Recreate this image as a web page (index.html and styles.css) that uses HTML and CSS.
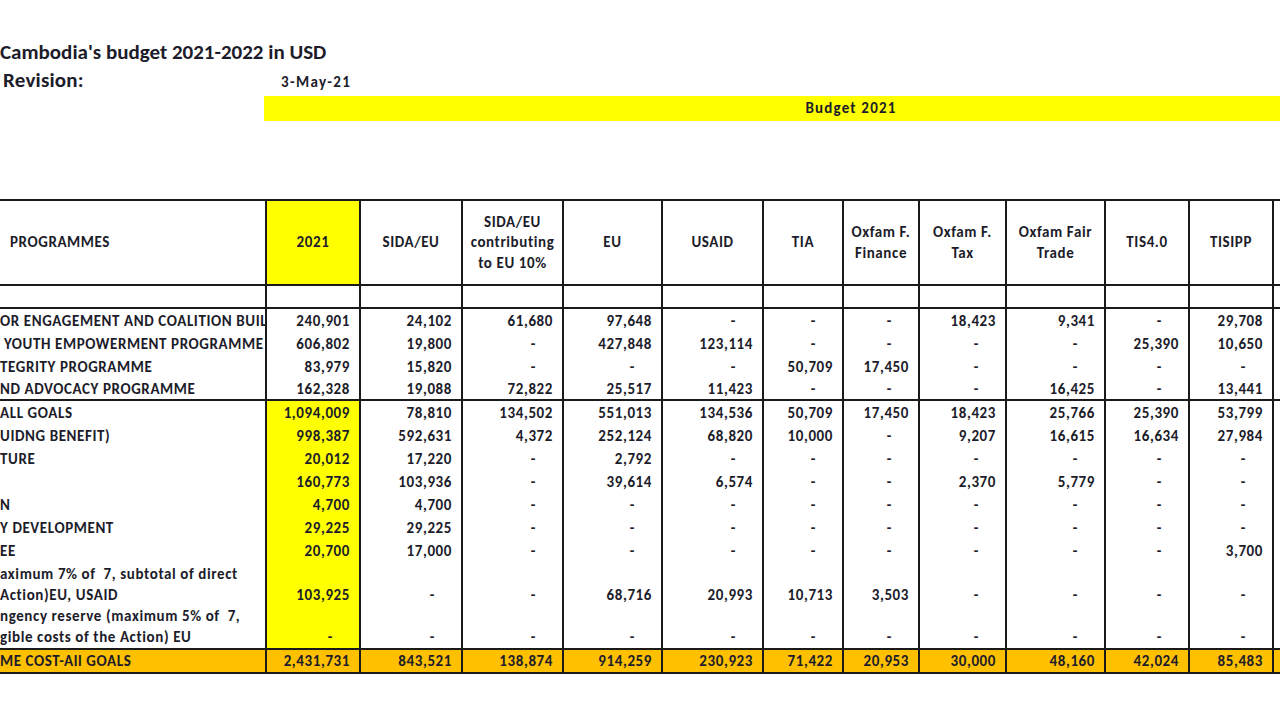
FILE: index.html
```html
<!DOCTYPE html>
<html lang="en">
<head>
<meta charset="utf-8">
<title>Cambodia's budget 2021-2022 in USD</title>
<link rel="stylesheet" href="styles.css">
</head>
<body>
<div class="sheet">
  <div class="title">Cambodia's budget 2021-2022 in USD</div>
  <div class="revision">
    <span class="rev-label">Revision:</span>
    <span class="rev-date">3-May-21</span>
  </div>
  <div class="band-row">
    <div class="band">Budget 2021</div>
  </div>
  <table class="budget">
    <colgroup>
      <col class="c-label">
      <col class="c-2021">
      <col class="c-sida">
      <col class="c-sidaeu">
      <col class="c-eu">
      <col class="c-usaid">
      <col class="c-tia">
      <col class="c-oxfin">
      <col class="c-oxtax">
      <col class="c-oxfair">
      <col class="c-tis4">
      <col class="c-tisipp">
      <col class="c-extra">
    </colgroup>
    <thead>
      <tr class="head">
        <th class="lbl">PROGRAMMES</th>
        <th class="hl">2021</th>
        <th>SIDA/EU</th>
        <th>SIDA/EU contributing to EU 10%</th>
        <th>EU</th>
        <th>USAID</th>
        <th>TIA</th>
        <th>Oxfam F. Finance</th>
        <th>Oxfam F. Tax</th>
        <th>Oxfam Fair Trade</th>
        <th>TIS4.0</th>
        <th>TISIPP</th>
        <th></th>
      </tr>
      <tr class="blank">
        <td class="lbl"></td><td></td><td></td><td></td><td></td><td></td><td></td><td></td><td></td><td></td><td></td><td></td><td></td>
      </tr>
    </thead>
    <tbody class="progs">
      <tr><td class="lbl">OR ENGAGEMENT AND COALITION BUIL</td><td>240,901</td><td>24,102</td><td>61,680</td><td>97,648</td><td><i>-</i></td><td><i>-</i></td><td><i>-</i></td><td>18,423</td><td>9,341</td><td><i>-</i></td><td>29,708</td><td></td></tr>
      <tr><td class="lbl">&nbsp;YOUTH EMPOWERMENT PROGRAMME</td><td>606,802</td><td>19,800</td><td><i>-</i></td><td>427,848</td><td>123,114</td><td><i>-</i></td><td><i>-</i></td><td><i>-</i></td><td><i>-</i></td><td>25,390</td><td>10,650</td><td></td></tr>
      <tr><td class="lbl">TEGRITY PROGRAMME</td><td>83,979</td><td>15,820</td><td><i>-</i></td><td><i>-</i></td><td><i>-</i></td><td>50,709</td><td>17,450</td><td><i>-</i></td><td><i>-</i></td><td><i>-</i></td><td><i>-</i></td><td></td></tr>
      <tr><td class="lbl">ND ADVOCACY PROGRAMME</td><td>162,328</td><td>19,088</td><td>72,822</td><td>25,517</td><td>11,423</td><td><i>-</i></td><td><i>-</i></td><td><i>-</i></td><td>16,425</td><td><i>-</i></td><td>13,441</td><td></td></tr>
    </tbody>
    <tbody class="costs">
      <tr><td class="lbl">ALL GOALS</td><td class="hl">1,094,009</td><td>78,810</td><td>134,502</td><td>551,013</td><td>134,536</td><td>50,709</td><td>17,450</td><td>18,423</td><td>25,766</td><td>25,390</td><td>53,799</td><td></td></tr>
      <tr><td class="lbl">UIDNG BENEFIT)</td><td class="hl">998,387</td><td>592,631</td><td>4,372</td><td>252,124</td><td>68,820</td><td>10,000</td><td><i>-</i></td><td>9,207</td><td>16,615</td><td>16,634</td><td>27,984</td><td></td></tr>
      <tr><td class="lbl">TURE</td><td class="hl">20,012</td><td>17,220</td><td><i>-</i></td><td>2,792</td><td><i>-</i></td><td><i>-</i></td><td><i>-</i></td><td><i>-</i></td><td><i>-</i></td><td><i>-</i></td><td><i>-</i></td><td></td></tr>
      <tr><td class="lbl"></td><td class="hl">160,773</td><td>103,936</td><td><i>-</i></td><td>39,614</td><td>6,574</td><td><i>-</i></td><td><i>-</i></td><td>2,370</td><td>5,779</td><td><i>-</i></td><td><i>-</i></td><td></td></tr>
      <tr><td class="lbl">N</td><td class="hl">4,700</td><td>4,700</td><td><i>-</i></td><td><i>-</i></td><td><i>-</i></td><td><i>-</i></td><td><i>-</i></td><td><i>-</i></td><td><i>-</i></td><td><i>-</i></td><td><i>-</i></td><td></td></tr>
      <tr><td class="lbl">Y DEVELOPMENT</td><td class="hl">29,225</td><td>29,225</td><td><i>-</i></td><td><i>-</i></td><td><i>-</i></td><td><i>-</i></td><td><i>-</i></td><td><i>-</i></td><td><i>-</i></td><td><i>-</i></td><td><i>-</i></td><td></td></tr>
      <tr><td class="lbl">EE</td><td class="hl">20,700</td><td>17,000</td><td><i>-</i></td><td><i>-</i></td><td><i>-</i></td><td><i>-</i></td><td><i>-</i></td><td><i>-</i></td><td><i>-</i></td><td><i>-</i></td><td>3,700</td><td></td></tr>
      <tr class="tall t1"><td class="lbl">aximum 7% of&nbsp; 7, subtotal of direct<br>Action)EU, USAID</td><td class="hl">103,925</td><td><i>-</i></td><td><i>-</i></td><td>68,716</td><td>20,993</td><td>10,713</td><td>3,503</td><td><i>-</i></td><td><i>-</i></td><td><i>-</i></td><td><i>-</i></td><td></td></tr>
      <tr class="tall t2"><td class="lbl">ngency reserve (maximum 5% of&nbsp; 7,<br>gible costs of the Action) EU</td><td class="hl"><i>-</i></td><td><i>-</i></td><td><i>-</i></td><td><i>-</i></td><td><i>-</i></td><td><i>-</i></td><td><i>-</i></td><td><i>-</i></td><td><i>-</i></td><td><i>-</i></td><td><i>-</i></td><td></td></tr>
    </tbody>
    <tfoot>
      <tr class="total"><td class="lbl">ME COST-All GOALS</td><td>2,431,731</td><td>843,521</td><td>138,874</td><td>914,259</td><td>230,923</td><td>71,422</td><td>20,953</td><td>30,000</td><td>48,160</td><td>42,024</td><td>85,483</td><td></td></tr>
    </tfoot>
  </table>
</div>
</body>
</html>
```

FILE: styles.css
```css
html, body {
  margin: 0;
  padding: 0;
  background: #ffffff;
}

body {
  width: 1280px;
  height: 720px;
  overflow: hidden;
  font-family: "Carlito", "Lato", "Liberation Sans", sans-serif;
  color: #1c1c2a;
}

.sheet {
  width: 1280px;
}

.title {
  font-size: 21px;
  font-weight: 700;
  line-height: 26px;
  padding-top: 39px;
  white-space: nowrap;
}

.revision {
  display: flex;
  align-items: baseline;
  height: 22px;
  line-height: 22px;
  margin-top: 4px;
}

.rev-label {
  width: 278px;
  padding-left: 3px;
  font-size: 21px;
  font-weight: 700;
  letter-spacing: 0.2px;
}

.rev-date {
  font-size: 15px;
  font-weight: 700;
  letter-spacing: 1.4px;
}

.band-row {
  margin-top: 5px;
  padding-left: 264px;
  height: 25px;
}

.band {
  width: 1174px;
  height: 25px;
  line-height: 25px;
  background: #ffff00;
  text-align: center;
  font-size: 15px;
  font-weight: 700;
  letter-spacing: 1.2px;
}

.budget {
  margin-top: 78px;
  border-collapse: separate;
  border-spacing: 0;
  table-layout: fixed;
  width: 1312px;
  font-size: 15px;
  font-weight: 700;
  letter-spacing: 0.6px;
}

.c-label { width: 265px; }
.c-2021 { width: 94px; }
.c-sida { width: 102px; }
.c-sidaeu { width: 101px; }
.c-eu { width: 99px; }
.c-usaid { width: 101px; }
.c-tia { width: 80px; }
.c-oxfin { width: 76px; }
.c-oxtax { width: 87px; }
.c-oxfair { width: 99px; }
.c-tis4 { width: 84px; }
.c-tisipp { width: 84px; }
.c-extra { width: 40px; }

.budget th,
.budget td {
  border-left: 2px solid #1a1a1a;
  padding: 0 9px 0 2px;
  text-align: right;
  white-space: nowrap;
  overflow: hidden;
  line-height: 20px;
  vertical-align: middle;
}

.budget .lbl {
  border-left: none;
  text-align: left;
  padding: 0;
}

.head {
  height: 87px;
}

.head th {
  border-top: 2px solid #1a1a1a;
  border-bottom: 2px solid #1a1a1a;
  text-align: center;
  white-space: normal;
  padding: 0 3px;
  line-height: 20.5px;
}

.head th.lbl {
  padding-left: 10px;
  text-align: left;
}

.head th.hl {
  background: #ffff00;
}

.blank {
  height: 23px;
}

.blank td {
  border-bottom: 2px solid #1a1a1a;
}

.progs tr,
.costs tr {
  height: 23px;
}

.progs tr:last-child td {
  border-bottom: 2px solid #1a1a1a;
}

.costs td.hl {
  background: #ffff00;
}

.costs tr.t1 {
  height: 44px;
}

.costs tr.t2 {
  height: 41px;
}

.costs tr.tall td {
  vertical-align: bottom;
  line-height: 21px;
  padding-bottom: 0;
}

.total {
  height: 26px;
}

.total td {
  background: #ffc000;
  border-top: 2px solid #1a1a1a;
  border-bottom: 2px solid #1a1a1a;
}

.budget i {
  font-style: normal;
  display: inline-block;
  margin-right: 17px;
}
```
